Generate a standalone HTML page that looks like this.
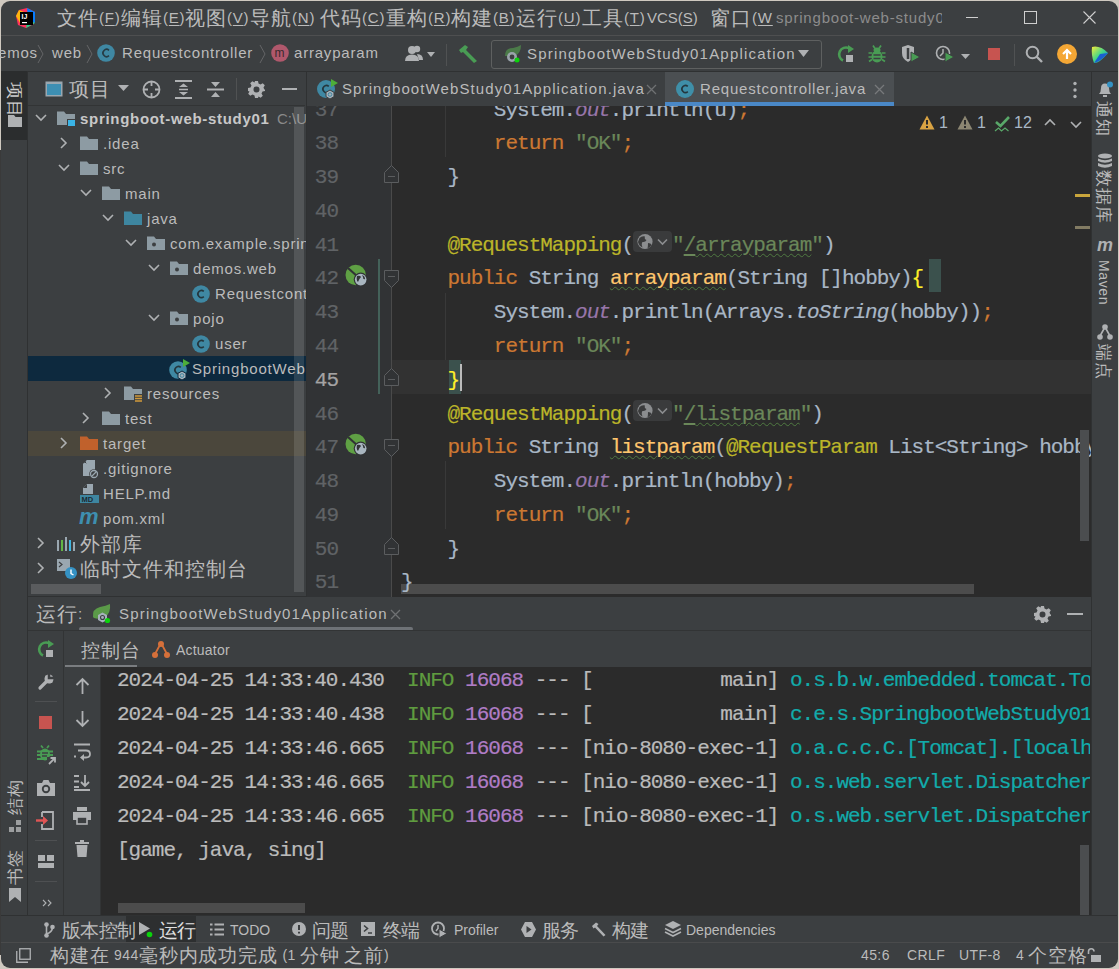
<!DOCTYPE html>
<html><head><meta charset="utf-8">
<style>
*{box-sizing:border-box;margin:0;padding:0}
html,body{width:1119px;height:969px;overflow:hidden;background:#cfc9c0}
body{font-family:"Liberation Sans",sans-serif;color:#bbbbbb;font-size:15px;position:relative}
.a{position:absolute}
.win{position:absolute;left:1px;top:1px;width:1117px;height:967px;background:#3c3f41;border-radius:9px;overflow:hidden}
.t{position:absolute;white-space:nowrap;line-height:20px;letter-spacing:0.8px}
.c{font-size:1.333em;line-height:0;letter-spacing:0.05em;position:relative;top:2px}
.m{font-family:"Liberation Mono",monospace;font-size:21px;letter-spacing:-1px;-webkit-text-stroke:0.2px currentColor;white-space:pre;position:absolute;line-height:24px}
.hl{position:absolute;height:1px}
.vl{position:absolute;width:1px}
svg{position:absolute;overflow:visible}
.inl{display:inline-block;width:39px;height:21px;vertical-align:-1.5px;background:#3a3b3c;border-radius:4px;position:relative}
.inl svg{left:0;top:0}
.sm .c{letter-spacing:-0.04em}
u{text-decoration:underline;text-underline-offset:2px}
</style></head><body>
<div class="win"></div>
<!-- ===== MENU BAR ===== -->
<div class="hl" style="left:1px;top:35px;width:1117px;background:#4e4f50"></div>
<svg style="left:16px;top:7px" width="20" height="22" viewBox="0 0 20 22">
 <polygon points="3,3 11,1 19,5 18,17 10,21 2,18 0,9" fill="#fe315d"/>
 <polygon points="11,1 19,5 19,16 12,12" fill="#087cfa"/>
 <polygon points="0,9 3,3 8,5 4,16" fill="#fdb60d"/>
 <polygon points="12,12 19,16 10,21 " fill="#21d789"/>
 <rect x="4" y="5" width="13" height="13" fill="#000"/>
 <rect x="6" y="15" width="5" height="1.2" fill="#fff"/>
 <text x="5.5" y="11.5" font-size="7" font-weight="bold" fill="#fff" font-family="Liberation Sans">IJ</text>
</svg>
<div class="t" style="left:57px;top:8px"><span class="c">文件</span>(<u>F</u>)</div>
<div class="t" style="left:121px;top:8px"><span class="c">编辑</span>(<u>E</u>)</div>
<div class="t" style="left:185px;top:8px"><span class="c">视图</span>(<u>V</u>)</div>
<div class="t" style="left:250px;top:8px"><span class="c">导航</span>(<u>N</u>)</div>
<div class="t" style="left:320px;top:8px"><span class="c">代码</span>(<u>C</u>)</div>
<div class="t" style="left:386px;top:8px"><span class="c">重构</span>(<u>R</u>)</div>
<div class="t" style="left:451px;top:8px"><span class="c">构建</span>(<u>B</u>)</div>
<div class="t" style="left:516px;top:8px"><span class="c">运行</span>(<u>U</u>)</div>
<div class="t" style="left:582px;top:8px"><span class="c">工具</span>(<u>T</u>)</div>
<div class="t" style="left:647px;top:8px;letter-spacing:0">VCS(<u>S</u>)</div>
<div class="t" style="left:710px;top:8px"><span class="c">窗口</span>(<u>W</u></div>
<div class="t" style="left:776px;top:8px;color:#8c8c8c;width:166px;overflow:hidden">springboot-web-study01</div>
<div class="hl" style="left:966px;top:17px;width:12px;background:#cfcfcf"></div>
<div class="a" style="left:1024px;top:11px;width:13px;height:13px;border:1px solid #cfcfcf"></div>
<svg style="left:1083px;top:11px" width="13" height="13"><path d="M0.5 0.5L12.5 12.5M12.5 0.5L0.5 12.5" stroke="#cfcfcf" stroke-width="1.1"/></svg>

<!-- ===== TOOLBAR / BREADCRUMB ===== -->
<div class="hl" style="left:1px;top:71px;width:1117px;background:#2f3132"></div>
<div class="t" style="left:-2px;top:43px">emos</div>
<svg style="left:37px;top:44px" width="7" height="20"><path d="M1 1L6 10L1 19" stroke="#646567" fill="none"/></svg>
<div class="t" style="left:52px;top:43px">web</div>
<svg style="left:86px;top:44px" width="7" height="20"><path d="M1 1L6 10L1 19" stroke="#646567" fill="none"/></svg>
<svg style="left:97px;top:44px" width="18" height="18"><circle cx="9" cy="9" r="8.8" fill="#3f88a3"/><path d="M12 6.3A3.6 3.6 0 1 0 12 11.7" stroke="#263b44" stroke-width="1.6" fill="none"/></svg>
<div class="t" style="left:122px;top:43px">Requestcontroller</div>
<svg style="left:259px;top:44px" width="7" height="20"><path d="M1 1L6 10L1 19" stroke="#646567" fill="none"/></svg>
<svg style="left:271px;top:44px" width="18" height="18"><circle cx="9" cy="9" r="8.8" fill="#b0586c"/><text x="3.6" y="13" font-size="12" fill="#3a2a2e" font-family="Liberation Sans">m</text></svg>
<div class="t" style="left:294px;top:43px">arrayparam</div>
<!-- user icon -->
<svg style="left:405px;top:45px" width="32" height="17"><circle cx="7" cy="5" r="4" fill="#afb1b3"/><path d="M0 16Q0 9.5 7 9.5Q14 9.5 14 16Z" fill="#afb1b3"/><circle cx="12" cy="4" r="3.2" fill="#afb1b3"/><path d="M12 9Q18 9 18 15L14 15Z" fill="#afb1b3"/><path d="M22 7L30 7L26 12Z" fill="#afb1b3"/></svg>
<div class="vl" style="left:446px;top:44px;height:22px;background:#505253"></div>
<svg style="left:457px;top:44px" width="22" height="20"><path d="M2 6L8 1L11 3L9 6L20 17L17 19L6 8L4 9Z" fill="#499c54"/></svg>
<div class="a" style="left:491px;top:40px;width:331px;height:29px;border:1px solid #5e6060;border-radius:3px"></div>
<svg style="left:503px;top:44px" width="20" height="20"><path d="M2 12Q2 4 10 4Q15 3 18 1Q18 9 12 12Q8 14 4 12Z" fill="#4b7a49"/><circle cx="9" cy="13" r="5" fill="#9aa4ab"/><circle cx="9" cy="13" r="2.4" fill="#3c3f41"/><circle cx="14" cy="16" r="2.5" fill="#0bd20b"/></svg>
<div class="t" style="left:527px;top:44px;letter-spacing:1.2px">SpringbootWebStudy01Application</div>
<svg style="left:798px;top:50px" width="12" height="8"><path d="M0 0L11 0L5.5 7Z" fill="#afb1b3"/></svg>
<!-- run icons -->
<svg style="left:837px;top:45px" width="20" height="18"><path d="M12 3.2A6.5 6.5 0 1 0 6 15.5" stroke="#499c54" stroke-width="2.6" fill="none"/><path d="M11 0L17 4L11 8Z" fill="#499c54"/><rect x="9" y="10" width="7" height="7" fill="#afb1b3"/></svg>
<svg style="left:868px;top:45px" width="18" height="18"><path d="M5 0.5L7 3.5M13 0.5L11 3.5M0.5 8H4M14 8H17.5M0.5 12H4M14 12H17.5M1 16.5L4 14.5M17 16.5L14 14.5" stroke="#499c54" stroke-width="1.7"/><ellipse cx="9" cy="5" rx="3.5" ry="2.5" fill="#499c54"/><ellipse cx="9" cy="11.5" rx="5.5" ry="6" fill="#499c54"/><path d="M5.5 10H12.5M5.5 13.5H12.5" stroke="#3c3f41" stroke-width="1.4"/></svg>
<svg style="left:901px;top:45px" width="20" height="18"><path d="M1 2L7 0L13 2L13 8Q13 14 7 17Q1 14 1 8Z" fill="#afb1b3"/><path d="M7 3L7 14" stroke="#3c3f41" stroke-width="2.5"/><path d="M10 7L19 12L10 17Z" fill="#499c54" stroke="#3c3f41" stroke-width="1"/></svg>
<svg style="left:935px;top:45px" width="38" height="18"><circle cx="8" cy="8" r="6.5" stroke="#afb1b3" stroke-width="1.6" fill="none"/><path d="M8 4L8 8L5 11" stroke="#afb1b3" stroke-width="1.5" fill="none"/><path d="M10 7L19 12L10 17Z" fill="#499c54" stroke="#3c3f41" stroke-width="1"/><path d="M26 9L35 9L30.5 14Z" fill="#afb1b3"/></svg>
<div class="a" style="left:988px;top:48px;width:12px;height:12px;background:#c75450"></div>
<div class="vl" style="left:1014px;top:44px;height:22px;background:#505253"></div>
<svg style="left:1025px;top:45px" width="20" height="20"><circle cx="7.5" cy="7.5" r="5.8" stroke="#afb1b3" stroke-width="2" fill="none"/><path d="M11.5 11.5L17 17" stroke="#afb1b3" stroke-width="2.4"/></svg>
<svg style="left:1057px;top:44px" width="21" height="21"><circle cx="10" cy="10" r="10" fill="#f4a735"/><path d="M10 15V7M6 10L10 6L14 10" stroke="#fff" stroke-width="2.2" fill="none"/></svg>
<svg style="left:1091px;top:45px" width="19" height="19"><defs><linearGradient id="tb" x1="0" y1="0" x2="1" y2="1"><stop offset="0" stop-color="#f5ea3a"/><stop offset="0.5" stop-color="#3fd68a"/><stop offset="1" stop-color="#1a6cdc"/></linearGradient></defs><path d="M1 2Q9 0 17 8Q9 18 3 18Q0 10 1 2Z" fill="url(#tb)"/><path d="M17 8L9 9L3 18Q10 16 17 8Z" fill="#1b5fd0"/></svg>

<!-- ===== LEFT STRIPE ===== -->
<div class="vl" style="left:27px;top:71px;height:844px;background:#2f3132"></div>
<div class="a" style="left:1px;top:71px;width:26px;height:69px;background:#2b2d2e"></div>
<div class="t" style="left:0px;top:87px;transform:rotate(90deg);transform-origin:15px 10px;width:30px;text-align:center;color:#cfcfcf;font-size:12.5px;letter-spacing:0"><span class="c">项目</span></div>
<svg style="left:8px;top:115px" width="14" height="13"><path d="M0 0H6L7.5 2H14V12H0Z" fill="#afb1b3"/></svg>
<div class="t" style="left:0px;top:790px;transform:rotate(-90deg);transform-origin:15px 10px;width:30px;text-align:center;font-size:12.5px;letter-spacing:0"><span class="c">结构</span></div>
<svg style="left:9px;top:820px" width="12" height="12"><rect x="7" y="0" width="5" height="5" fill="#9c9e9f"/><rect x="0" y="7" width="5" height="5" fill="#9c9e9f"/><rect x="7" y="7" width="5" height="5" fill="#9c9e9f"/></svg>
<div class="t" style="left:0px;top:860px;transform:rotate(-90deg);transform-origin:15px 10px;width:30px;text-align:center;font-size:12.5px;letter-spacing:0"><span class="c">书签</span></div>
<svg style="left:9px;top:888px" width="12" height="14"><path d="M0 0H12V14L6 9L0 14Z" fill="#afb1b3"/></svg>

<!-- ===== PROJECT PANEL ===== -->
<div class="hl" style="left:28px;top:105px;width:277px;background:#323435"></div>
<svg style="left:45px;top:81px" width="18" height="17"><rect x="0.5" y="0.5" width="17" height="15" fill="#9aa7b0"/><rect x="2" y="3" width="14" height="11" fill="#3d8fb3"/></svg>
<div class="t" style="left:69px;top:79px"><span class="c">项目</span></div>
<svg style="left:118px;top:85px" width="12" height="7"><path d="M0 0H11L5.5 6Z" fill="#afb1b3"/></svg>
<svg style="left:142px;top:80px" width="19" height="19"><circle cx="9.5" cy="9.5" r="8" stroke="#afb1b3" stroke-width="1.8" fill="none"/><path d="M9.5 1V6M9.5 13V18M1 9.5H6M13 9.5H18" stroke="#afb1b3" stroke-width="1.8"/></svg>
<svg style="left:175px;top:80px" width="17" height="19"><path d="M0 1H17M0 18H17" stroke="#afb1b3" stroke-width="2"/><path d="M4 7L8.5 3.5L13 7ZM4 12L8.5 15.5L13 12Z" fill="#afb1b3"/><path d="M4 9.5H13" stroke="#afb1b3" stroke-width="1.5"/></svg>
<svg style="left:207px;top:80px" width="17" height="19"><path d="M0 9.5H17" stroke="#afb1b3" stroke-width="2"/><path d="M4 2L8.5 7L13 2ZM4 17L8.5 12L13 17Z" fill="#afb1b3"/></svg>
<div class="vl" style="left:236px;top:78px;height:22px;background:#505253"></div>
<svg style="left:248px;top:81px" width="17" height="17" viewBox="0 0 17 17"><path fill="#afb1b3" fill-rule="evenodd" d="M7 0H10L10.5 2.5L12.5 3.5L14.7 2.2L16.8 4.3L15.5 6.5L16.3 8.5L17 8.5V10L14.5 10.5L13.5 12.5L14.8 14.7L12.7 16.8L10.5 15.5L10 17H7L6.5 14.5L4.5 13.5L2.3 14.8L0.2 12.7L1.5 10.5L0 10V7L2.5 6.5L3.5 4.5L2.2 2.3L4.3 0.2L6.5 1.5ZM8.5 5.5A3 3 0 1 0 8.5 11.5A3 3 0 1 0 8.5 5.5Z"/></svg>
<div class="hl" style="left:282px;top:88px;width:15px;height:2px;background:#afb1b3"></div>
<!-- scrollbars -->
<div class="a" style="left:31px;top:584px;width:70px;height:10px;background:#5a5c5e"></div>


<div class="a" style="left:28px;top:356px;width:278px;height:25px;background:#0d293e"></div>
<div class="a" style="left:28px;top:431px;width:278px;height:25px;background:#4b473c"></div>
<div class="a" style="left:28px;top:106px;width:278px;height:490px;overflow:hidden">
<svg style="left:7px;top:8px" width="12" height="8"><path d="M1 1L6 6L11 1" stroke="#afb1b3" stroke-width="1.6" fill="none"/></svg>
<svg style="left:29px;top:5px" width="19" height="15"><path d="M0 0.5H7L9 3H18V14H0Z" fill="#8d9ba3"/><rect x="10" y="8" width="8" height="7" fill="#3d3f41"/><rect x="11" y="9" width="7" height="6" fill="#3ab4e6"/></svg>
<div class="t" style="left:52px;top:3px;font-weight:bold;letter-spacing:0.7px;color:#c8c8c8">springboot-web-study01</div>
<div class="t" style="left:249px;top:3px;color:#8a8a8a;letter-spacing:0">C:\Users</div>
<svg style="left:32px;top:31px" width="8" height="12"><path d="M1 1L6 6L1 11" stroke="#afb1b3" stroke-width="1.6" fill="none"/></svg>
<svg style="left:52px;top:30px" width="19" height="15"><path d="M0 0.5H7L9 3H18V14H0Z" fill="#8d9ba3"/></svg>
<div class="t" style="left:75px;top:28px;">.idea</div>
<svg style="left:30px;top:58px" width="12" height="8"><path d="M1 1L6 6L11 1" stroke="#afb1b3" stroke-width="1.6" fill="none"/></svg>
<svg style="left:52px;top:55px" width="19" height="15"><path d="M0 0.5H7L9 3H18V14H0Z" fill="#8d9ba3"/></svg>
<div class="t" style="left:75px;top:53px;">src</div>
<svg style="left:52px;top:83px" width="12" height="8"><path d="M1 1L6 6L11 1" stroke="#afb1b3" stroke-width="1.6" fill="none"/></svg>
<svg style="left:74px;top:80px" width="19" height="15"><path d="M0 0.5H7L9 3H18V14H0Z" fill="#8d9ba3"/></svg>
<div class="t" style="left:97px;top:78px;">main</div>
<svg style="left:74px;top:108px" width="12" height="8"><path d="M1 1L6 6L11 1" stroke="#afb1b3" stroke-width="1.6" fill="none"/></svg>
<svg style="left:96px;top:105px" width="19" height="15"><path d="M0 0.5H7L9 3H18V14H0Z" fill="#3e86a0"/></svg>
<div class="t" style="left:119px;top:103px;">java</div>
<svg style="left:97px;top:133px" width="12" height="8"><path d="M1 1L6 6L11 1" stroke="#afb1b3" stroke-width="1.6" fill="none"/></svg>
<svg style="left:119px;top:130px" width="19" height="15"><path d="M0 0.5H7L9 3H18V14H0Z" fill="#8d9ba3"/><circle cx="7" cy="8.5" r="2" fill="#3c3f41"/></svg>
<div class="t" style="left:142px;top:128px;">com.example.springboot</div>
<svg style="left:120px;top:158px" width="12" height="8"><path d="M1 1L6 6L11 1" stroke="#afb1b3" stroke-width="1.6" fill="none"/></svg>
<svg style="left:142px;top:155px" width="19" height="15"><path d="M0 0.5H7L9 3H18V14H0Z" fill="#8d9ba3"/><circle cx="7" cy="8.5" r="2" fill="#3c3f41"/></svg>
<div class="t" style="left:165px;top:153px;">demos.web</div>
<svg style="left:164px;top:179px" width="18" height="18"><circle cx="9" cy="9" r="8.8" fill="#3f88a3"/><path d="M11.8 6.4A3.5 3.5 0 1 0 11.8 11.6" stroke="#24363d" stroke-width="1.6" fill="none"/></svg>
<div class="t" style="left:187px;top:178px;">Requestcontroller</div>
<svg style="left:120px;top:208px" width="12" height="8"><path d="M1 1L6 6L11 1" stroke="#afb1b3" stroke-width="1.6" fill="none"/></svg>
<svg style="left:142px;top:205px" width="19" height="15"><path d="M0 0.5H7L9 3H18V14H0Z" fill="#8d9ba3"/><circle cx="7" cy="8.5" r="2" fill="#3c3f41"/></svg>
<div class="t" style="left:165px;top:203px;">pojo</div>
<svg style="left:164px;top:229px" width="18" height="18"><circle cx="9" cy="9" r="8.8" fill="#3f88a3"/><path d="M11.8 6.4A3.5 3.5 0 1 0 11.8 11.6" stroke="#24363d" stroke-width="1.6" fill="none"/></svg>
<div class="t" style="left:187px;top:228px;">user</div>
<svg style="left:141px;top:253px" width="22" height="22"><circle cx="9" cy="11" r="8.8" fill="#3f88a3"/><path d="M11.8 8.4A3.5 3.5 0 1 0 11.8 13.6" stroke="#24363d" stroke-width="1.6" fill="none"/><path d="M14 0L21 4L14 8Z" fill="#4dae38"/><path d="M13 12L17 14.3V18.7L13 21L9 18.7V14.3Z" fill="#a6b2bb" stroke="#0d293e" stroke-width="1"/><circle cx="13" cy="16.5" r="1.8" stroke="#3f88a3" stroke-width="1" fill="none"/></svg>
<div class="t" style="left:164px;top:253px;">SpringbootWebStudy01Application</div>
<svg style="left:76px;top:281px" width="8" height="12"><path d="M1 1L6 6L1 11" stroke="#afb1b3" stroke-width="1.6" fill="none"/></svg>
<svg style="left:96px;top:280px" width="19" height="15"><path d="M0 0.5H7L9 3H18V14H0Z" fill="#8d9ba3"/><rect x="10" y="8" width="9" height="8" fill="#3c3f41"/><path d="M11 10H18M11 12.5H18M11 15H18" stroke="#d19a3b" stroke-width="1.4"/></svg>
<div class="t" style="left:119px;top:278px;">resources</div>
<svg style="left:54px;top:306px" width="8" height="12"><path d="M1 1L6 6L1 11" stroke="#afb1b3" stroke-width="1.6" fill="none"/></svg>
<svg style="left:74px;top:305px" width="19" height="15"><path d="M0 0.5H7L9 3H18V14H0Z" fill="#8d9ba3"/></svg>
<div class="t" style="left:97px;top:303px;">test</div>
<svg style="left:32px;top:331px" width="8" height="12"><path d="M1 1L6 6L1 11" stroke="#afb1b3" stroke-width="1.6" fill="none"/></svg>
<svg style="left:52px;top:330px" width="19" height="15"><path d="M0 0.5H7L9 3H18V14H0Z" fill="#c0612c"/></svg>
<div class="t" style="left:75px;top:328px;">target</div>
<svg style="left:54px;top:353px" width="18" height="20"><path d="M1 5L5 1H13V17H1Z" fill="#9aa7b0"/><path d="M1 5H5V1Z" fill="#3c3f41"/><path d="M1.5 4.5H4.5V1.5" stroke="#9aa7b0" stroke-width="1" fill="none"/><circle cx="12" cy="15" r="4.8" fill="#3c3f41"/><circle cx="12" cy="15" r="3.5" stroke="#9aa7b0" stroke-width="1.3" fill="none"/><path d="M9.5 17.5L14.5 12.5" stroke="#9aa7b0" stroke-width="1.3"/></svg>
<div class="t" style="left:75px;top:353px;">.gitignore</div>
<svg style="left:52px;top:378px" width="19" height="20"><path d="M7 0H13V10H3V4Z" fill="#9aa7b0"/><path d="M3 4H7V0Z" fill="#3c3f41"/><rect x="0" y="11" width="19" height="8" fill="#3e86a0"/><text x="1.5" y="18" font-size="7.5" font-weight="bold" fill="#1c2b33" font-family="Liberation Sans">MD</text></svg>
<div class="t" style="left:75px;top:378px;">HELP.md</div>
<div class="a" style="left:51px;top:398px;font:italic bold 22px 'Liberation Sans';color:#3e8fb0;line-height:26px">m</div>
<div class="t" style="left:75px;top:403px;">pom.xml</div>
<svg style="left:9px;top:431px" width="8" height="12"><path d="M1 1L6 6L1 11" stroke="#afb1b3" stroke-width="1.6" fill="none"/></svg>
<svg style="left:29px;top:430px" width="19" height="16"><path d="M1 4V15M9 1V15M17 6V15" stroke="#9aa7b0" stroke-width="2"/><path d="M5 4V15" stroke="#62b543" stroke-width="2"/><path d="M13 4V15" stroke="#40b6e0" stroke-width="2"/></svg>
<div class="t" style="left:52px;top:428px;"><span class="c">外部库</span></div>
<svg style="left:9px;top:456px" width="8" height="12"><path d="M1 1L6 6L1 11" stroke="#afb1b3" stroke-width="1.6" fill="none"/></svg>
<svg style="left:29px;top:453px" width="20" height="20"><rect x="0" y="0" width="13" height="12" fill="#9aa7b0"/><path d="M2 3L5 5.5L2 8" stroke="#3c3f41" stroke-width="1.2" fill="none"/><circle cx="14" cy="14" r="6" fill="#3592c4"/><path d="M14 10.5V14.5L16.5 16" stroke="#fff" stroke-width="1.4" fill="none"/></svg>
<div class="t" style="left:52px;top:453px;"><span class="c">临时文件和控制台</span></div>
</div>
<div class="a" style="left:294px;top:107px;width:10px;height:485px;background:rgba(255,255,255,0.12)"></div>
<div class="vl" style="left:306px;top:72px;height:525px;background:#2f3132"></div>
<div class="a" style="left:665px;top:72px;width:229px;height:33px;background:#4b4f52"></div>
<div class="a" style="left:665px;top:102px;width:229px;height:4px;background:#4a88c7"></div>
<svg style="left:317px;top:79px" width="22" height="22"><circle cx="9" cy="10" r="9" fill="#3f88a3"/><path d="M11.8 7.4A3.5 3.5 0 1 0 11.8 12.6" stroke="#24363d" stroke-width="1.6" fill="none"/><path d="M14 0L21 4L14 8Z" fill="#4dae38"/><path d="M13 11L17 13.3V17.7L13 20L9 17.7V13.3Z" fill="#a6b2bb" stroke="#3c3f41" stroke-width="1"/><circle cx="13" cy="15.5" r="1.8" stroke="#3f88a3" stroke-width="1" fill="none"/></svg>
<div class="t" style="left:342px;top:79px;letter-spacing:1.1px">SpringbootWebStudy01Application.java</div>
<svg style="left:646px;top:84px" width="11" height="11"><path d="M1 1L10 10M10 1L1 10" stroke="#6f7173" stroke-width="1.3"/></svg>
<svg style="left:676px;top:80px" width="18" height="18"><circle cx="9" cy="9" r="9" fill="#3f8fa8"/><path d="M11.8 6.4A3.5 3.5 0 1 0 11.8 11.6" stroke="#24363d" stroke-width="1.6" fill="none"/></svg>
<div class="t" style="left:700px;top:79px">Requestcontroller.java</div>
<svg style="left:874px;top:84px" width="11" height="11"><path d="M1 1L10 10M10 1L1 10" stroke="#77797b" stroke-width="1.3"/></svg>
<svg style="left:1072px;top:81px" width="6" height="18"><circle cx="3" cy="2.5" r="1.7" fill="#afb1b3"/><circle cx="3" cy="9" r="1.7" fill="#afb1b3"/><circle cx="3" cy="15.5" r="1.7" fill="#afb1b3"/></svg>
<div class="a" style="left:307px;top:106px;width:84px;height:491px;background:#313335"></div>
<div class="a" style="left:392px;top:106px;width:699px;height:491px;background:#2b2b2b"></div>
<div class="a" style="left:392px;top:360.0px;width:699px;height:33.8px;background:#323232"></div>
<div class="a" style="left:307px;top:106px;width:784px;height:491px;overflow:hidden">
<div class="a" style="left:138px;top:-50.0px;width:1px;height:101.4px;background:#393939"></div>
<div class="a" style="left:138px;top:186.5px;width:1px;height:67.6px;background:#393939"></div>
<div class="a" style="left:138px;top:355.4px;width:1px;height:67.6px;background:#393939"></div>
<div class="a" style="left:84px;top:0;width:1px;height:491px;background:#4a4a4a"></div>
<div class="a" style="left:94px;top:478px;width:573px;height:10px;background:#4c4c4c"></div>
<div class="a" style="left:622px;top:152.7px;width:12px;height:33.8px;background:#3b514d"></div>
<div class="a" style="left:142px;top:254.0px;width:12px;height:33.8px;background:#3b514d"></div>
<div class="a" style="left:71px;top:153px;width:2px;height:135px;background:#44625a"></div>
<div class="m" style="left:-29px;top:-12.5px;width:60px;text-align:right;color:#606366;line-height:34px">37</div>
<div class="m" style="left:94px;top:-12.5px;color:#a9b7c6;line-height:34px">        System.<span style="color:#9876aa;font-style:italic;">out</span>.println(u)<span style="color:#cc7832;">;</span></div>
<div class="m" style="left:-29px;top:21.3px;width:60px;text-align:right;color:#606366;line-height:34px">38</div>
<div class="m" style="left:94px;top:21.3px;color:#a9b7c6;line-height:34px">        <span style="color:#cc7832;">return</span> <span style="color:#6a8759;">"OK"</span><span style="color:#cc7832;">;</span></div>
<div class="m" style="left:-29px;top:55.1px;width:60px;text-align:right;color:#606366;line-height:34px">39</div>
<div class="m" style="left:94px;top:55.1px;color:#a9b7c6;line-height:34px">    }</div>
<div class="m" style="left:-29px;top:88.8px;width:60px;text-align:right;color:#606366;line-height:34px">40</div>
<div class="m" style="left:-29px;top:122.6px;width:60px;text-align:right;color:#606366;line-height:34px">41</div>
<div class="m" style="left:94px;top:122.6px;color:#a9b7c6;line-height:34px">    <span style="color:#bbb529;">@RequestMapping</span>(<span class="inl"><svg width="39" height="21"><circle cx="12" cy="10.5" r="7.6" fill="#8b8d8f"/><path d="M6.5 7Q9 4.5 12 5.5Q11 8 13.5 9Q12.5 11.5 9.5 11Q8 13 9.5 16.5Q6 15 5 11Z M15 12Q18 12 18.5 14Q17 16.5 14.5 17.5Q15 15 15 12Z" fill="#3a3b3c"/><path d="M25 8.5L29.5 13L34 8.5" stroke="#8b8d8f" stroke-width="1.6" fill="none"/></svg></span><span style="color:#6a8759;">"</span><span style="color:#6a8759;text-decoration:underline;text-underline-offset:3px;">/</span><span style="color:#6a8759;text-decoration:underline wavy #4f7a41;text-decoration-thickness:1px;text-underline-offset:2px;">arrayparam</span><span style="color:#6a8759;">"</span>)</div>
<div class="m" style="left:-29px;top:156.4px;width:60px;text-align:right;color:#606366;line-height:34px">42</div>
<div class="m" style="left:94px;top:156.4px;color:#a9b7c6;line-height:34px">    <span style="color:#cc7832;">public</span> String <span style="color:#ffc66d;text-decoration:underline wavy #4f7a41;text-decoration-thickness:1px;text-underline-offset:2px;">arrayparam</span>(String []hobby)<span style="color:#ffef28;">{</span></div>
<div class="m" style="left:-29px;top:190.2px;width:60px;text-align:right;color:#606366;line-height:34px">43</div>
<div class="m" style="left:94px;top:190.2px;color:#a9b7c6;line-height:34px">        System.<span style="color:#9876aa;font-style:italic;">out</span>.println(Arrays.<span style="font-style:italic;">toString</span>(hobby))<span style="color:#cc7832;">;</span></div>
<div class="m" style="left:-29px;top:224.0px;width:60px;text-align:right;color:#606366;line-height:34px">44</div>
<div class="m" style="left:94px;top:224.0px;color:#a9b7c6;line-height:34px">        <span style="color:#cc7832;">return</span> <span style="color:#6a8759;">"OK"</span><span style="color:#cc7832;">;</span></div>
<div class="m" style="left:-29px;top:257.7px;width:60px;text-align:right;color:#a4a3a3;line-height:34px">45</div>
<div class="m" style="left:94px;top:257.7px;color:#a9b7c6;line-height:34px">    <span style="color:#ffef28;">}</span></div>
<div class="m" style="left:-29px;top:291.5px;width:60px;text-align:right;color:#606366;line-height:34px">46</div>
<div class="m" style="left:94px;top:291.5px;color:#a9b7c6;line-height:34px">    <span style="color:#bbb529;">@RequestMapping</span>(<span class="inl"><svg width="39" height="21"><circle cx="12" cy="10.5" r="7.6" fill="#8b8d8f"/><path d="M6.5 7Q9 4.5 12 5.5Q11 8 13.5 9Q12.5 11.5 9.5 11Q8 13 9.5 16.5Q6 15 5 11Z M15 12Q18 12 18.5 14Q17 16.5 14.5 17.5Q15 15 15 12Z" fill="#3a3b3c"/><path d="M25 8.5L29.5 13L34 8.5" stroke="#8b8d8f" stroke-width="1.6" fill="none"/></svg></span><span style="color:#6a8759;">"</span><span style="color:#6a8759;text-decoration:underline;text-underline-offset:3px;">/</span><span style="color:#6a8759;text-decoration:underline wavy #4f7a41;text-decoration-thickness:1px;text-underline-offset:2px;">listparam</span><span style="color:#6a8759;">"</span>)</div>
<div class="m" style="left:-29px;top:325.3px;width:60px;text-align:right;color:#606366;line-height:34px">47</div>
<div class="m" style="left:94px;top:325.3px;color:#a9b7c6;line-height:34px">    <span style="color:#cc7832;">public</span> String <span style="color:#ffc66d;text-decoration:underline wavy #4f7a41;text-decoration-thickness:1px;text-underline-offset:2px;">listparam</span>(<span style="color:#bbb529;">@RequestParam</span> List&lt;String&gt; hobby)</div>
<div class="m" style="left:-29px;top:359.1px;width:60px;text-align:right;color:#606366;line-height:34px">48</div>
<div class="m" style="left:94px;top:359.1px;color:#a9b7c6;line-height:34px">        System.<span style="color:#9876aa;font-style:italic;">out</span>.println(hobby)<span style="color:#cc7832;">;</span></div>
<div class="m" style="left:-29px;top:392.9px;width:60px;text-align:right;color:#606366;line-height:34px">49</div>
<div class="m" style="left:94px;top:392.9px;color:#a9b7c6;line-height:34px">        <span style="color:#cc7832;">return</span> <span style="color:#6a8759;">"OK"</span><span style="color:#cc7832;">;</span></div>
<div class="m" style="left:-29px;top:426.6px;width:60px;text-align:right;color:#606366;line-height:34px">50</div>
<div class="m" style="left:94px;top:426.6px;color:#a9b7c6;line-height:34px">    }</div>
<div class="m" style="left:-29px;top:460.4px;width:60px;text-align:right;color:#606366;line-height:34px">51</div>
<div class="m" style="left:94px;top:460.4px;color:#a9b7c6;line-height:34px">}</div>
<svg style="left:77px;top:59.2px" width="16" height="19"><path d="M0.5 17.5H14.5V7.5L7.5 0.5L0.5 7.5Z" fill="#313335" stroke="#5b5d5f"/><path d="M4 11.5H11" stroke="#5b5d5f"/></svg>
<svg style="left:77px;top:261.8px" width="16" height="19"><path d="M0.5 17.5H14.5V7.5L7.5 0.5L0.5 7.5Z" fill="#313335" stroke="#5b5d5f"/><path d="M4 11.5H11" stroke="#5b5d5f"/></svg>
<svg style="left:77px;top:430.7px" width="16" height="19"><path d="M0.5 17.5H14.5V7.5L7.5 0.5L0.5 7.5Z" fill="#313335" stroke="#5b5d5f"/><path d="M4 11.5H11" stroke="#5b5d5f"/></svg>
<svg style="left:77px;top:164.0px" width="16" height="19"><path d="M0.5 0.5H14.5V10.5L7.5 17.5L0.5 10.5Z" fill="#313335" stroke="#5b5d5f"/><path d="M4 6.5H11" stroke="#5b5d5f"/></svg>
<svg style="left:77px;top:332.9px" width="16" height="19"><path d="M0.5 0.5H14.5V10.5L7.5 17.5L0.5 10.5Z" fill="#313335" stroke="#5b5d5f"/><path d="M4 6.5H11" stroke="#5b5d5f"/></svg>
<svg style="left:38px;top:158.0px" width="24" height="24"><circle cx="10.7" cy="11" r="10.2" fill="#5fa044"/><path d="M3 4L13 13" stroke="#313335" stroke-width="2.2"/><circle cx="15.7" cy="15.6" r="7" fill="#313335"/><circle cx="15.7" cy="15.6" r="5.8" fill="#a8b5bf"/><path d="M12 12Q15 11 16 13Q14 15 13 18Q11 16 12 12ZM17 11Q20 12 20 15Q18 16 18 13Z" fill="#313335"/></svg>
<svg style="left:38px;top:326.9px" width="24" height="24"><circle cx="10.7" cy="11" r="10.2" fill="#5fa044"/><path d="M3 4L13 13" stroke="#313335" stroke-width="2.2"/><circle cx="15.7" cy="15.6" r="7" fill="#313335"/><circle cx="15.7" cy="15.6" r="5.8" fill="#a8b5bf"/><path d="M12 12Q15 11 16 13Q14 15 13 18Q11 16 12 12ZM17 11Q20 12 20 15Q18 16 18 13Z" fill="#313335"/></svg>
<div class="a" style="left:153px;top:257.8px;width:2px;height:27px;background:#bbbbbb"></div>
</div>
<svg style="left:919px;top:115px" width="16" height="15"><path d="M8 0.5L15.5 14.5H0.5Z" fill="#d9a343"/><path d="M8 5V9.5M8 11V13" stroke="#2b2b2b" stroke-width="2"/></svg>
<div class="t" style="left:939px;top:113px;font-size:16px;color:#a9b7c6">1</div>
<svg style="left:957px;top:115px" width="16" height="15"><path d="M8 0.5L15.5 14.5H0.5Z" fill="#8c8672"/><path d="M8 5V9.5M8 11V13" stroke="#2b2b2b" stroke-width="2"/></svg>
<div class="t" style="left:977px;top:113px;font-size:16px;color:#a9b7c6">1</div>
<svg style="left:995px;top:116px" width="16" height="16"><path d="M1 6L5.5 10L14 1" stroke="#59a869" stroke-width="2.6" fill="none"/><path d="M0 15L3.5 12L6.5 15L10 12L13.5 15" stroke="#59a869" stroke-width="1.2" fill="none"/></svg>
<div class="t" style="left:1014px;top:113px;font-size:16px;color:#a9b7c6;letter-spacing:0">12</div>
<svg style="left:1044px;top:118px" width="12" height="8"><path d="M1 7L6 2L11 7" stroke="#afb1b3" stroke-width="1.6" fill="none"/></svg>
<svg style="left:1070px;top:121px" width="12" height="8"><path d="M1 1L6 6L11 1" stroke="#afb1b3" stroke-width="1.6" fill="none"/></svg>
<div class="a" style="left:1075px;top:194px;width:15px;height:3px;background:#c9a53c"></div>
<div class="a" style="left:1075px;top:226px;width:15px;height:3px;background:#827b63"></div>
<div class="a" style="left:1080px;top:430px;width:9px;height:111px;background:#4b4d4f"></div>
<div class="vl" style="left:1091px;top:71px;height:844px;background:#2f3132"></div>
<svg style="left:1097px;top:81px" width="17" height="18"><path d="M2 13Q4 11 4 7Q4 2.5 8 2.5Q12 2.5 12 7Q12 11 14 13Z" fill="#afb1b3"/><rect x="6" y="14" width="4" height="2" fill="#afb1b3"/><circle cx="13" cy="3.5" r="3" fill="#3592c4"/></svg>
<div class="t" style="left:1089px;top:106px;transform:rotate(90deg);transform-origin:15px 10px;width:30px;text-align:center;font-size:12.5px;letter-spacing:0"><span class="c">通知</span></div>
<svg style="left:1097px;top:153px" width="16" height="16"><ellipse cx="8" cy="3" rx="7" ry="2.5" fill="#afb1b3"/><path d="M1 5.5Q8 9 15 5.5V8Q8 11.5 1 8ZM1 10Q8 13.5 15 10V13Q8 16.5 1 13Z" fill="#afb1b3"/></svg>
<div class="t" style="left:1084px;top:180px;transform:rotate(90deg);transform-origin:20px 10px;width:40px;text-align:center;font-size:12.5px;letter-spacing:0"><span class="c">数据库</span></div>
<div class="a" style="left:1097px;top:235px;font:italic bold 18px 'Liberation Sans';color:#afb1b3;line-height:20px">m</div>
<div class="t" style="left:1080px;top:275px;transform:rotate(90deg);transform-origin:24px 9px;width:48px;font-size:14px;letter-spacing:0.6px;line-height:18px">Maven</div>
<svg style="left:1097px;top:324px" width="16" height="16"><path d="M8 3L3 12M8 3L13 12" stroke="#afb1b3" stroke-width="1.6"/><circle cx="8" cy="3" r="2.8" fill="#afb1b3"/><circle cx="3" cy="13" r="2.8" fill="#afb1b3"/><circle cx="13" cy="13" r="2.8" fill="#afb1b3"/></svg>
<div class="t" style="left:1089px;top:349px;transform:rotate(90deg);transform-origin:15px 10px;width:30px;text-align:center;font-size:12.5px;letter-spacing:0"><span class="c">端点</span></div>
<div class="hl" style="left:28px;top:596px;width:278px;background:#2f3132"></div>
<div class="a" style="left:0;top:150px;width:1px;height:805px;background:#3a3a3a"></div>
<div class="t" style="left:36px;top:604px;letter-spacing:2px"><span class="c">运行</span>:</div>
<svg style="left:92px;top:604px" width="22" height="20"><path d="M1 13Q0 5 8 3Q14 2 18 0Q19 9 13 13Q7 16 2 14Z" fill="#5a9a48"/><path d="M10.5 8.5L15 11V16L10.5 18.5L6 16V11Z" fill="#a6b2bb"/><circle cx="10.5" cy="13.5" r="2" stroke="#3c3f41" stroke-width="1.1" fill="none"/><circle cx="15.5" cy="16.5" r="2.6" fill="#0bd20b"/></svg>
<div class="t" style="left:119px;top:604px;letter-spacing:1.2px">SpringbootWebStudy01Application</div>
<svg style="left:390px;top:609px" width="11" height="11"><path d="M1 1L10 10M10 1L1 10" stroke="#6f7173" stroke-width="1.3"/></svg>
<div class="a" style="left:79px;top:627px;width:334px;height:4px;background:#6e7276;border-radius:2px"></div>
<div class="hl" style="left:28px;top:630px;width:1063px;background:#323435"></div>
<svg style="left:1034px;top:606px" width="17" height="17" viewBox="0 0 17 17"><path fill="#afb1b3" fill-rule="evenodd" d="M7 0H10L10.5 2.5L12.5 3.5L14.7 2.2L16.8 4.3L15.5 6.5L16.3 8.5L17 8.5V10L14.5 10.5L13.5 12.5L14.8 14.7L12.7 16.8L10.5 15.5L10 17H7L6.5 14.5L4.5 13.5L2.3 14.8L0.2 12.7L1.5 10.5L0 10V7L2.5 6.5L3.5 4.5L2.2 2.3L4.3 0.2L6.5 1.5ZM8.5 5.5A3 3 0 1 0 8.5 11.5A3 3 0 1 0 8.5 5.5Z"/></svg>
<div class="hl" style="left:1067px;top:613px;width:16px;height:2px;background:#afb1b3"></div>
<div class="vl" style="left:63px;top:631px;height:284px;background:#323435"></div>
<div class="t" style="left:81px;top:640px;font-size:14px;letter-spacing:3px"><span class="c">控制台</span></div>
<div class="a" style="left:65px;top:665px;width:72px;height:2px;background:#7a7d80"></div>
<svg style="left:151px;top:640px" width="20" height="20"><path d="M10 3L4 14M10 3L16 14" stroke="#d5703a" stroke-width="1.8"/><circle cx="10" cy="4" r="3" fill="#d5703a"/><circle cx="4" cy="15" r="3" fill="#d5703a"/><circle cx="16" cy="15" r="3" fill="#d5703a"/></svg>
<div class="t" style="left:176px;top:640px;font-size:14px;letter-spacing:0.2px">Actuator</div>
<div class="vl" style="left:100px;top:667px;height:248px;background:#323435"></div>
<div class="a" style="left:101px;top:667px;width:990px;height:248px;background:#2b2b2b"></div>
<div class="hl" style="left:1px;top:915px;width:1116px;background:#2f3132"></div>
<svg style="left:37px;top:640px" width="20" height="19"><path d="M12 3.2A6.5 6.5 0 1 0 6 15.5" stroke="#499c54" stroke-width="2.6" fill="none"/><path d="M11 0L17 4L11 8Z" fill="#499c54"/><rect x="9" y="10" width="7" height="7" fill="#afb1b3"/></svg>
<svg style="left:38px;top:673px" width="17" height="17"><path d="M2 15L9 8" stroke="#afb1b3" stroke-width="3.2" stroke-linecap="round"/><path d="M8 2A5 5 0 0 0 15 9L13 7L12 4.5L9.5 4Z" fill="#afb1b3"/><circle cx="11" cy="6" r="4.5" fill="#afb1b3"/><path d="M11 0V5L16 5" stroke="#3c3f41" stroke-width="2.5" fill="none"/></svg>
<div class="hl" style="left:35px;top:701px;width:22px;background:#4e5052"></div>
<div class="a" style="left:39px;top:716px;width:13px;height:13px;background:#c75450"></div>
<svg style="left:37px;top:745px" width="20" height="20"><ellipse cx="8" cy="9.5" rx="5" ry="6" fill="#499c54"/><path d="M0 6.5H16M0 10H16M0 14H12M4 0.5L6 3M12 0.5L10 3" stroke="#499c54" stroke-width="1.8"/><path d="M5 8H11M5 11H10" stroke="#3c3f41" stroke-width="1.3"/><path d="M10 12L18 12L18 20L10 20Z" fill="#3c3f41"/><path d="M12 19L18 13M13.5 13H18V17.5" stroke="#afb1b3" stroke-width="1.8" fill="none"/></svg>
<svg style="left:37px;top:779px" width="18" height="17"><path d="M0 4H5L6.5 1H11.5L13 4H18V17H0Z" fill="#afb1b3"/><circle cx="9" cy="10" r="4.2" fill="#3c3f41"/><circle cx="9" cy="10" r="2.3" fill="#afb1b3"/></svg>
<svg style="left:36px;top:811px" width="19" height="19"><path d="M6 1H17V18H6V13M6 6V1" stroke="#afb1b3" stroke-width="1.8" fill="none"/><path d="M0 9.5H10" stroke="#e05555" stroke-width="2.4"/><path d="M7 5L12 9.5L7 14Z" fill="#e05555"/></svg>
<div class="hl" style="left:35px;top:840px;width:22px;background:#4e5052"></div>
<svg style="left:38px;top:855px" width="16" height="13"><rect x="0" y="0" width="7" height="6" fill="#afb1b3"/><rect x="9" y="0" width="7" height="6" fill="#afb1b3"/><rect x="0" y="8" width="16" height="5" fill="#afb1b3"/></svg>
<div class="hl" style="left:35px;top:881px;width:22px;background:#4e5052"></div>
<svg style="left:42px;top:899px" width="11" height="8"><path d="M1 1L4 4L1 7M6 1L9 4L6 7" stroke="#afb1b3" stroke-width="1.1" fill="none"/></svg>
<svg style="left:75px;top:677px" width="15" height="18"><path d="M7.5 2V17M1.5 8L7.5 2L13.5 8" stroke="#afb1b3" stroke-width="1.8" fill="none"/></svg>
<svg style="left:75px;top:710px" width="15" height="18"><path d="M7.5 1V16M1.5 10L7.5 16L13.5 10" stroke="#afb1b3" stroke-width="1.8" fill="none"/></svg>
<svg style="left:74px;top:743px" width="17" height="18"><path d="M0 1.5H16M4 7.5H12Q16 7.5 16 11Q16 14.5 12 14.5H8M0 13.5H2" stroke="#afb1b3" stroke-width="1.8" fill="none"/><path d="M10 11L6 14.5L10 18Z" fill="#afb1b3"/></svg>
<svg style="left:74px;top:775px" width="16" height="16"><path d="M0 1H5M0 6.5H5M0 12H5M0 15H16M11 0V11M7 7L11 11L15 7" stroke="#afb1b3" stroke-width="1.8" fill="none"/></svg>
<svg style="left:73px;top:807px" width="18" height="18"><rect x="4" y="0" width="10" height="4" fill="#afb1b3"/><path d="M0 5H18V13H0Z" fill="#afb1b3"/><rect x="4" y="10" width="10" height="7" fill="#3c3f41" stroke="#afb1b3" stroke-width="1.6"/></svg>
<svg style="left:75px;top:840px" width="14" height="17"><rect x="0" y="2" width="14" height="2" fill="#afb1b3"/><rect x="5" y="0" width="4" height="2" fill="#afb1b3"/><path d="M1.5 5H12.5L11.5 17H2.5Z" fill="#afb1b3"/></svg>
<div class="a" style="left:101px;top:667px;width:989px;height:248px;overflow:hidden">
<div class="m" style="left:16px;top:-2.7px;color:#bbbbbb;line-height:34px">2024-04-25 14:33:40.430  <span style="color:#5f9c3f">INFO</span> <span style="color:#b07cc6">16068</span> --- [           main] <span style="color:#12abab">o.s.b.w.embedded.tomcat.TomcatWebServer</span></div>
<div class="m" style="left:16px;top:31.2px;color:#bbbbbb;line-height:34px">2024-04-25 14:33:40.438  <span style="color:#5f9c3f">INFO</span> <span style="color:#b07cc6">16068</span> --- [           main] <span style="color:#12abab">c.e.s.SpringbootWebStudy01Application</span></div>
<div class="m" style="left:16px;top:65.1px;color:#bbbbbb;line-height:34px">2024-04-25 14:33:46.665  <span style="color:#5f9c3f">INFO</span> <span style="color:#b07cc6">16068</span> --- [nio-8080-exec-1] <span style="color:#12abab">o.a.c.c.C.[Tomcat].[localhost].[/]</span></div>
<div class="m" style="left:16px;top:99.0px;color:#bbbbbb;line-height:34px">2024-04-25 14:33:46.665  <span style="color:#5f9c3f">INFO</span> <span style="color:#b07cc6">16068</span> --- [nio-8080-exec-1] <span style="color:#12abab">o.s.web.servlet.DispatcherServlet</span></div>
<div class="m" style="left:16px;top:132.9px;color:#bbbbbb;line-height:34px">2024-04-25 14:33:46.665  <span style="color:#5f9c3f">INFO</span> <span style="color:#b07cc6">16068</span> --- [nio-8080-exec-1] <span style="color:#12abab">o.s.web.servlet.DispatcherServlet</span></div>
<div class="m" style="left:16px;top:166.8px;color:#bbbbbb;line-height:34px">[game, java, sing]</div>
</div>
<div class="a" style="left:118px;top:903px;width:187px;height:10px;background:#4c4c4c"></div>
<div class="a" style="left:1080px;top:845px;width:9px;height:70px;background:#4b4d4f"></div>
<div class="a" style="left:126px;top:916px;width:70px;height:26px;background:#2d2f30"></div>
<svg style="left:44px;top:922px" width="11" height="16"><circle cx="2.5" cy="2.5" r="2.3" fill="#afb1b3"/><circle cx="2.5" cy="13.5" r="2.3" fill="#afb1b3"/><circle cx="8.5" cy="5" r="2.3" fill="#afb1b3"/><path d="M2.5 2.5V13.5M8.5 5Q8.5 10 2.5 12" stroke="#afb1b3" stroke-width="1.6" fill="none"/></svg>
<div class="t sm" style="left:62px;top:920px;font-size:14px"><span class="c">版本控制</span></div>
<svg style="left:139px;top:922px" width="14" height="16"><path d="M0 0L11 6.5L0 13Z" fill="#afb1b3"/><circle cx="10.5" cy="12.5" r="2.8" fill="#0bd20b"/></svg>
<div class="t sm" style="left:159px;top:920px;font-size:14px;color:#e0e0e0"><span class="c">运行</span></div>
<svg style="left:210px;top:923px" width="14" height="13"><path d="M0 1.5H2.5M0 6.5H2.5M0 11.5H2.5M4.5 1.5H14M4.5 6.5H14M4.5 11.5H14" stroke="#afb1b3" stroke-width="2"/></svg>
<div class="t" style="left:230px;top:920px;font-size:14px;letter-spacing:0px">TODO</div>
<svg style="left:292px;top:922px" width="14" height="14"><circle cx="7" cy="7" r="7" fill="#afb1b3"/><path d="M7 3V8M7 9.8V11.5" stroke="#3c3f41" stroke-width="2"/></svg>
<div class="t sm" style="left:312px;top:920px;font-size:14px"><span class="c">问题</span></div>
<svg style="left:361px;top:922px" width="14" height="14"><rect x="0" y="0" width="14" height="14" fill="#afb1b3"/><path d="M3 3.5L6.5 6.5L3 9.5M7 11H11" stroke="#3c3f41" stroke-width="1.6" fill="none"/></svg>
<div class="t sm" style="left:383px;top:920px;font-size:14px"><span class="c">终端</span></div>
<svg style="left:431px;top:921px" width="16" height="17"><circle cx="7" cy="7.5" r="6" stroke="#afb1b3" stroke-width="1.8" fill="none"/><path d="M7 4V7.5L5 10" stroke="#afb1b3" stroke-width="1.5" fill="none"/><path d="M8 8L16 12.5L8 17Z" fill="#afb1b3" stroke="#3c3f41" stroke-width="1"/></svg>
<div class="t" style="left:454px;top:920px;font-size:14px;letter-spacing:0px">Profiler</div>
<svg style="left:521px;top:922px" width="15" height="15"><path d="M4 0H11L15 7.5L11 15H4L0 7.5Z" fill="#afb1b3"/><path d="M5.5 4L10.5 7.5L5.5 11Z" fill="#3c3f41"/></svg>
<div class="t sm" style="left:542px;top:920px;font-size:14px"><span class="c">服务</span></div>
<svg style="left:591px;top:922px" width="15" height="15"><path d="M1 4L5 0.5L7.5 2L6 4L14.5 13L12.5 14.5L4 5.5L2.5 6.5Z" fill="#afb1b3"/></svg>
<div class="t sm" style="left:612px;top:920px;font-size:14px"><span class="c">构建</span></div>
<svg style="left:665px;top:921px" width="16" height="16"><path d="M8 0L16 4L8 8L0 4Z" fill="#afb1b3"/><path d="M0 7.5L8 11.5L16 7.5M0 11L8 15L16 11" stroke="#afb1b3" stroke-width="1.6" fill="none"/></svg>
<div class="t" style="left:686px;top:920px;font-size:14px;letter-spacing:0px">Dependencies</div>
<div class="hl" style="left:1px;top:942px;width:1117px;background:#4a4b4c"></div>
<svg style="left:16px;top:948px" width="16" height="16"><path d="M0.75 3V14.25H12" stroke="#afb1b3" stroke-width="1.3" fill="none"/><rect x="3.75" y="0.75" width="10.5" height="10.5" stroke="#afb1b3" stroke-width="1.3" fill="none"/></svg>
<div class="t" style="left:50px;top:945px;font-size:14px;letter-spacing:0.4px"><span class="c">构建在</span> 944<span class="c">毫秒内成功完成</span> (1 <span class="c">分钟</span> <span class="c">之前</span>)</div>
<div class="t" style="left:861px;top:945px;font-size:14px;letter-spacing:0.4px">45:6</div>
<div class="t" style="left:907px;top:945px;font-size:14px;letter-spacing:0.4px">CRLF</div>
<div class="t" style="left:959px;top:945px;font-size:14px;letter-spacing:0.4px">UTF-8</div>
<div class="t" style="left:1016px;top:945px;font-size:14px;letter-spacing:0.4px">4 <span class="c">个空格</span></div>
<svg style="left:1087px;top:948px" width="14" height="14"><path d="M1.5 6V3.5A2.7 2.7 0 0 1 7 3.5" stroke="#afb1b3" stroke-width="1.6" fill="none"/><rect x="4" y="7" width="10" height="7" fill="#afb1b3"/></svg>
</body></html>
